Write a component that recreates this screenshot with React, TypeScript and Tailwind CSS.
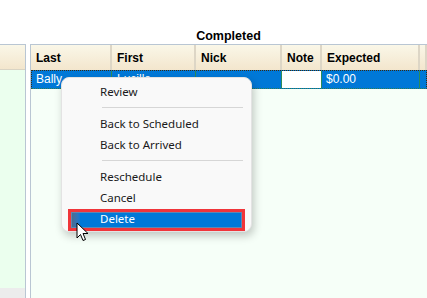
import React from 'react';

const columns = [
  { label: 'Last', w: 'w-[81px]' },
  { label: 'First', w: 'w-[84px]' },
  { label: 'Nick', w: 'w-[86px]' },
  { label: 'Note', w: 'w-[40px]' },
  { label: 'Expected', w: 'w-[98px]' },
  { label: '', w: 'flex-1' },
];

const MenuItem = ({ label, active }: { label: string; active?: boolean }) => (
  <div className="h-[21px] flex items-center relative">
    {active && (
      <div className="absolute left-[6px] right-[6px] top-[1px] bottom-[-2px] border-[3px] border-[#f0353a] p-0">
        <div className="h-full w-full bg-[#0078d7] border border-[#5d87b3] bg-gradient-to-r from-[#4a6b8e] from-0% to-[#0078d7] to-[5%]" />
      </div>
    )}
    <span className={`relative pl-[38px] ${active ? 'text-white' : 'text-[#1a1a1a]'}`}>{label}</span>
  </div>
);

const Separator = () => (
  <div className="h-[11px] flex items-center pl-[40px] pr-[8px]">
    <div className="h-px w-full bg-[#d6d6d6]" />
  </div>
);

export default function App() {
  return (
    <div className="w-[427px] h-[298px] bg-white relative overflow-hidden flex flex-col font-['Liberation_Sans',Arial,sans-serif]">
      <div className="h-[44px] flex shrink-0">
        <div className="w-[30px]" />
        <div className="flex-1 flex items-end justify-center pb-[1px]">
          <span className="text-[12.5px] font-bold leading-[14px] text-black">Completed</span>
        </div>
      </div>
      <div className="flex-1 flex">
        <div className="w-[26px] flex flex-col border-t border-r border-[#b9c6d3]">
          <div className="h-[25px] bg-gradient-to-b from-[#faf7e8] to-[#f3e6cd] border-b border-[#d9d4c4]" />
          <div className="flex-1 bg-[#ebffee]" />
          <div className="h-[10px] bg-[#ececec]" />
        </div>
        <div className="w-[4px]" />
        <div className="flex-1 flex flex-col border-t border-l border-[#b9c6d3] bg-[#f6fff8]">
          <div className="h-[25px] flex bg-gradient-to-b from-[#faf7e8] to-[#f3e6cd]">
            {columns.map((c, i) => (
              <div
                key={i}
                className={`${c.w} h-full flex items-center pl-[5px] border-r-2 border-r-[#ddd6c6] text-[12px] font-bold text-black`}
              >
                {c.label}
              </div>
            ))}
          </div>
          <div className="h-[19px] flex bg-[#0078d7] border border-dotted border-[#3a2a10] border-b-[#2e7d4f] text-white text-[12px] leading-[14px]">
            <div className="w-[80px] pl-[4px] pt-[1px] border-r border-[#2e8b57]">Bally</div>
            <div className="w-[84px] pl-[5px] pt-[1px] border-r border-[#2e8b57]">Lucille</div>
            <div className="w-[86px] border-r border-[#2e8b57]" />
            <div className="w-[40px] bg-white border-r border-[#2e8b57]" />
            <div className="w-[98px] pl-[4px] pt-[1px] border-r border-[#2e8b57]">$0.00</div>
            <div className="flex-1" />
          </div>
          <div className="flex-1" />
        </div>
      </div>

      <div className="absolute left-[61px] top-[77px] w-[191px] h-[155px] rounded-[8px] bg-[#f9f9f9] border border-[#e3e3e3] shadow-[2px_4px_8px_rgba(0,0,0,0.22)] pt-[3px] text-[11.5px] font-['Noto_Sans',sans-serif]">
        <MenuItem label="Review" />
        <Separator />
        <MenuItem label="Back to Scheduled" />
        <MenuItem label="Back to Arrived" />
        <Separator />
        <MenuItem label="Reschedule" />
        <MenuItem label="Cancel" />
        <MenuItem label="Delete" active />
      </div>

      <svg className="absolute left-[76px] top-[222px]" width="14" height="21" viewBox="0 0 14 21">
        <path d="M1 1 L1 16 L4.5 12.5 L7 18.5 L9.5 17.5 L7 11.5 L12 11.5 Z" fill="white" stroke="black" strokeWidth="1" strokeLinejoin="round" />
      </svg>
    </div>
  );
}
